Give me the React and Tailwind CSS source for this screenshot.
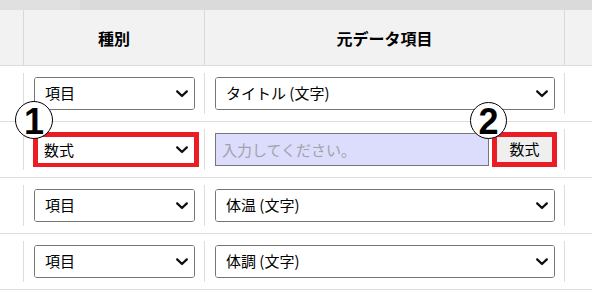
import React from 'react';

const Chevron = () => (
  <svg className="absolute right-[6px] top-1/2 -translate-y-1/2 pointer-events-none" width="12" height="8" viewBox="0 0 12 8">
    <polyline points="1.2,1.4 6,6 10.8,1.4" fill="none" stroke="#111" strokeWidth="2.3" strokeLinecap="round" strokeLinejoin="round" />
  </svg>
);

const SelectBox = ({ value, options, className }) => (
  <div className={`relative ${className}`}>
    <select
      defaultValue={value}
      className="appearance-none w-full h-full bg-white text-[15px] text-black pl-[10px] outline-none"
    >
      {options.map((o) => (
        <option key={o}>{o}</option>
      ))}
    </select>
    <Chevron />
  </div>
);

const Circled = ({ n, className }) => (
  <div className={`absolute rounded-full border-[1.5px] border-black bg-white flex items-center justify-center font-['Liberation_Sans',sans-serif] font-bold text-[36px] leading-none text-black ${className}`}>
    <span className="mt-[3px]">{n}</span>
  </div>
);

const rows = [
  { kind: '項目', source: 'タイトル (文字)' },
  { kind: '数式', formula: true },
  { kind: '項目', source: '体温 (文字)' },
  { kind: '項目', source: '体調 (文字)' },
];

export default function App() {
  return (
    <div className="relative w-[592px] h-[291px] overflow-hidden bg-white font-['Noto_Sans_CJK_JP',sans-serif]">
      {/* top strip */}
      <div className="flex h-[10px] bg-[#dadada]">
        <div className="w-[80px] bg-[#e0e0e0]"></div>
      </div>

      {/* header */}
      <div className="flex h-[56px] bg-[#f2f2f2] border-b border-[#dddddd]">
        <div className="w-[23px]"></div>
        <div className="w-[181px] border-l border-[#d9d9d9] flex items-center justify-center text-[16px] font-bold text-black">種別</div>
        <div className="w-[360px] border-l border-[#d9d9d9] flex items-center justify-center text-[16px] font-bold text-black">元データ項目</div>
        <div className="flex-1 border-l border-[#d9d9d9]"></div>
      </div>

      {/* body rows */}
      {rows.map((row, i) => (
        <div key={i} className="flex h-[56px] py-[7px] border-b border-[#dddddd]">
          <div className="w-[23px]"></div>
          {row.formula ? (
            <div className="w-[181px] border-l border-[#dddddd] pl-[9px] flex items-center">
              <div className="relative w-[166px] h-[35px] border-[5px] border-[#ec1c24] bg-white">
                <select defaultValue="数式" className="appearance-none w-full h-full bg-white text-[15px] text-black pl-[6px] outline-none">
                  <option>項目</option>
                  <option>数式</option>
                </select>
                <Chevron />
              </div>
            </div>
          ) : (
            <div className="w-[181px] border-l border-[#dddddd] pl-[10px] flex items-center">
              <SelectBox
                value={row.kind}
                options={['項目', '数式']}
                className="w-[161px] h-[33px] border border-[#767676] rounded-[3px] overflow-hidden"
              />
            </div>
          )}
          {row.formula ? (
            <div className="w-[360px] border-l border-[#dddddd] pl-[10px] flex items-center">
              <input
                placeholder="入力してください。"
                className="w-[274px] h-[33px] border border-[#767676] bg-[#dcdcfc] pl-[6px] text-[15px] outline-none placeholder:text-[#a2a2a8]"
              />
              <button className="ml-[3px] w-[65px] h-[35px] border-[5px] border-[#ec1c24] bg-[#efefef] text-[15px] text-black flex items-center justify-center">
                数式
              </button>
            </div>
          ) : (
            <div className="w-[360px] border-l border-[#dddddd] pl-[10px] flex items-center">
              <SelectBox
                value={row.source}
                options={[row.source]}
                className="w-[340px] h-[33px] border border-[#767676] rounded-[3px] overflow-hidden"
              />
            </div>
          )}
          <div className="flex-1 border-l border-[#dddddd]"></div>
        </div>
      ))}

      {/* annotations */}
      <Circled n="1" className="left-[15px] top-[101px] w-[38px] h-[38px]" />
      <Circled n="2" className="left-[470px] top-[102px] w-[37px] h-[37px]" />
    </div>
  );
}
